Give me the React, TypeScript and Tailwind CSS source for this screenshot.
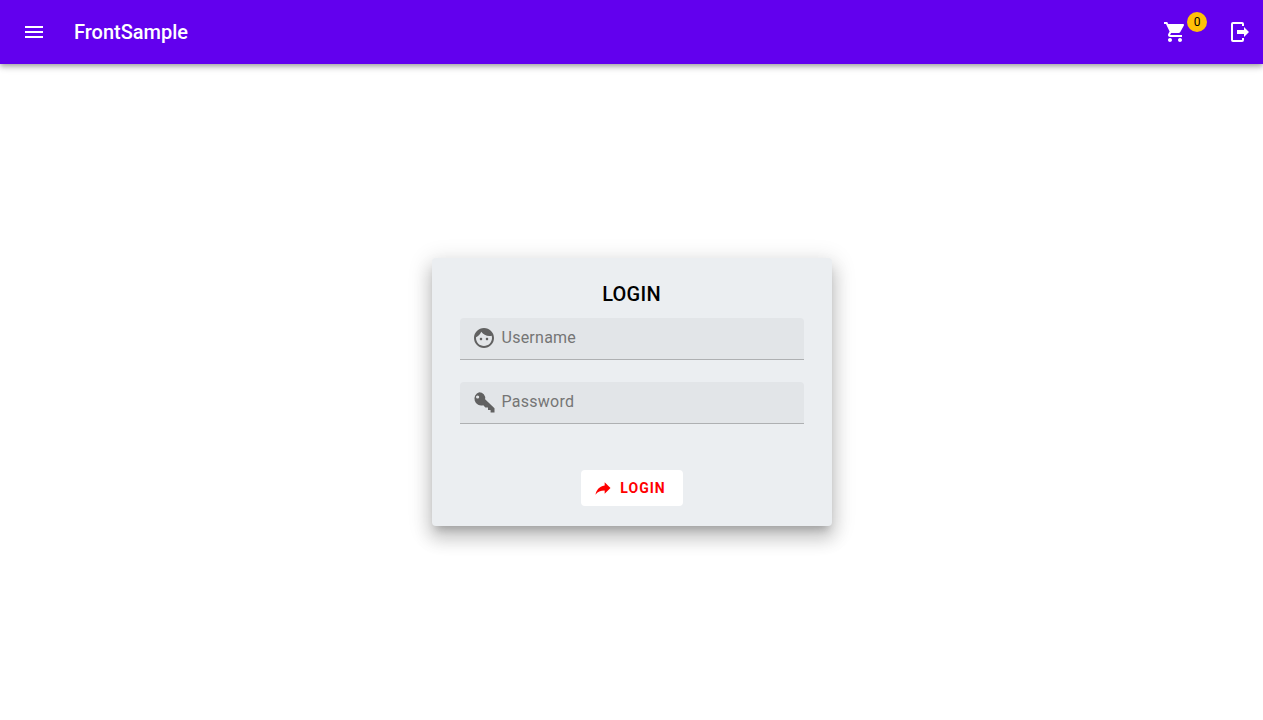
const FieldIcon = ({ d }: { d: string }) => (
  <svg viewBox="0 0 24 24" className="w-6 h-6 ml-3 fill-[#616161] shrink-0" fillRule="evenodd">
    <path d={d} />
  </svg>
)

const Field = ({ label, icon }: { label: string; icon: string }) => (
  <div className="h-[42px] flex items-center pb-[2px] bg-[#e2e5e8] rounded-t border-b border-[#aeb0b2]">
    <FieldIcon d={icon} />
    <span className="ml-[6px] text-base text-[#757575] tracking-[0.25px]">{label}</span>
  </div>
)

const faceIcon =
  'M9 11.75c-.69 0-1.25.56-1.25 1.25s.56 1.25 1.25 1.25 1.25-.56 1.25-1.25-.56-1.25-1.25-1.25zm6 0c-.69 0-1.25.56-1.25 1.25s.56 1.25 1.25 1.25 1.25-.56 1.25-1.25-.56-1.25-1.25-1.25zM12 2C6.48 2 2 6.48 2 12s4.48 10 10 10 10-4.48 10-10S17.52 2 12 2zm0 18c-4.41 0-8-3.59-8-8 0-.29.02-.58.05-.86 2.36-1.05 4.23-2.98 5.21-5.37C11.07 8.33 14.05 10 17.42 10c.78 0 1.53-.09 2.25-.26.21.71.33 1.47.33 2.26 0 4.41-3.59 8-8 8z'
const keyIcon =
  'M7.2 2.2A6 6 0 0 1 13.1 9.2L22.5 18.2V22.5H18.6V20H16V17.4H13.4L11.3 15.2A6 6 0 1 1 7.2 2.2zM5.6 5.4a1.6 1.6 0 1 0 0 3.2 1.6 1.6 0 0 0 0-3.2z'

export default function App() {
  return (
    <div className="min-h-screen flex flex-col bg-white font-['Roboto',sans-serif]">
      <header className="h-16 shrink-0 bg-[#6200ee] text-white flex items-center pl-[22px] pr-[11px] shadow-[0_2px_4px_-1px_rgba(0,0,0,0.2),0_4px_5px_0_rgba(0,0,0,0.14),0_1px_10px_0_rgba(0,0,0,0.12)]">
        <svg viewBox="0 0 24 24" className="w-6 h-6 fill-white">
          <path d="M3 18h18v-2H3v2zm0-5h18v-2H3v2zm0-7v2h18V6H3z" />
        </svg>
        <span className="ml-[28px] text-xl font-medium">FrontSample</span>
        <div className="ml-auto flex items-center">
          <div className="relative">
            <svg viewBox="0 0 24 24" className="w-6 h-6 fill-white">
              <path d="M7 18c-1.1 0-1.99.9-1.99 2S5.9 22 7 22s2-.9 2-2-.9-2-2-2zM1 2v2h2l3.6 7.59-1.35 2.45c-.16.28-.25.61-.25.96 0 1.1.9 2 2 2h12v-2H7.42c-.14 0-.25-.11-.25-.25l.03-.12.9-1.63h7.45c.75 0 1.41-.41 1.75-1.03l3.58-6.49c.08-.14.12-.31.12-.48 0-.55-.45-1-1-1H5.21l-.94-2H1zm16 16c-1.1 0-1.99.9-1.99 2s.89 2 1.99 2 2-.9 2-2-.9-2-2-2z" />
            </svg>
            <span className="absolute -top-[8px] left-[24px] w-5 h-5 rounded-full bg-[#ffc107] text-black text-xs flex items-center justify-center">
              0
            </span>
          </div>
          <svg viewBox="0 0 24 24" className="w-6 h-6 fill-white ml-[41px]">
            <path d="M16 17v-3H9v-4h7V7l5 5-5 5M14 2a2 2 0 0 1 2 2v2h-2V4H5v16h9v-2h2v2a2 2 0 0 1-2 2H5a2 2 0 0 1-2-2V4a2 2 0 0 1 2-2h9z" />
          </svg>
        </div>
      </header>

      <main className="flex-1 flex items-center justify-center">
        <div className="w-[400px] h-[268px] bg-[#ebeef1] rounded px-7 pt-[22px] shadow-[0_7px_8px_-4px_rgba(0,0,0,0.2),0_12px_17px_2px_rgba(0,0,0,0.14),0_5px_22px_4px_rgba(0,0,0,0.12)]">
          <h2 className="text-xl leading-7 font-medium text-center text-black tracking-[0.25px]">LOGIN</h2>
          <div className="mt-[10px] flex flex-col gap-[22px]">
            <Field label="Username" icon={faceIcon} />
            <Field label="Password" icon={keyIcon} />
          </div>
          <div className="mt-[46px] flex justify-center">
            <button className="w-[102px] h-9 pr-[4px] bg-white rounded flex items-center justify-center text-[#ff0000] text-sm font-bold tracking-[1px]">
              <svg viewBox="0 0 24 24" className="w-5 h-5 fill-[#ff0000] mr-[7px]">
                <path d="M21 12l-7-7v4C7 10 4 15 3 20c2.5-3.5 6-5.1 11-5.1V19l7-7z" />
              </svg>
              LOGIN
            </button>
          </div>
        </div>
      </main>
    </div>
  )
}
